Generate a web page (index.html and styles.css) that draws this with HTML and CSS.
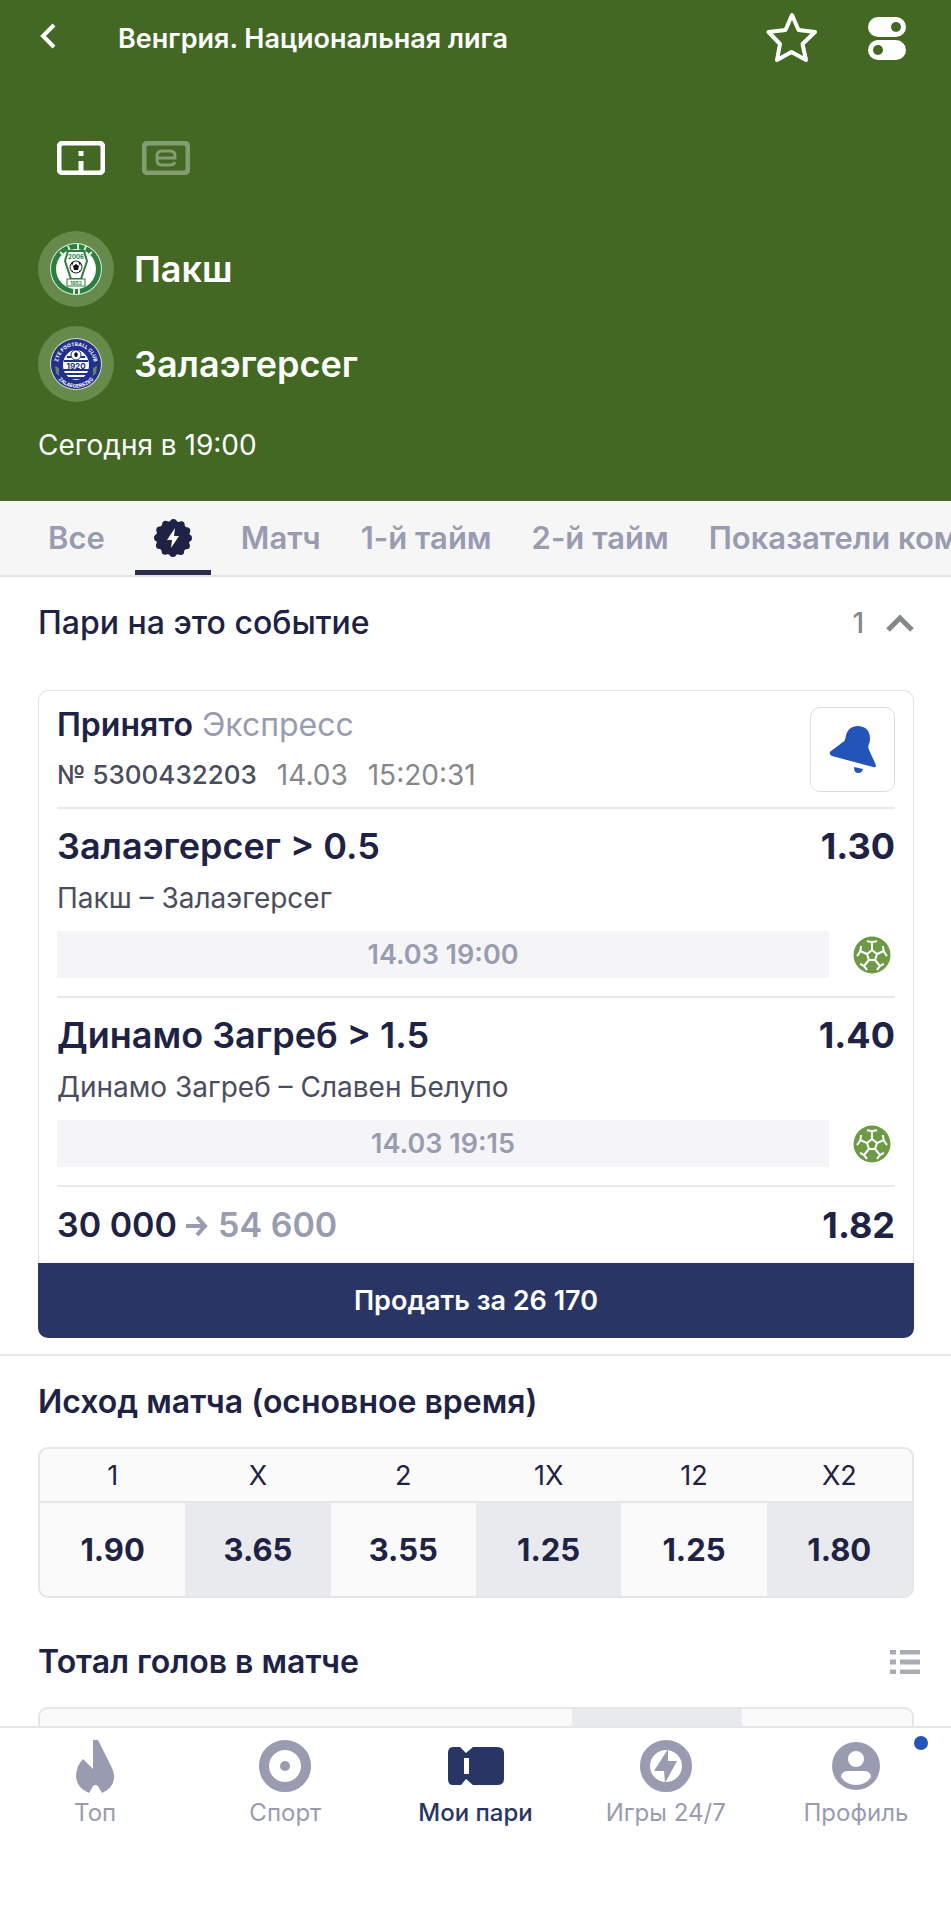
FILE: index.html
```html
<!DOCTYPE html>
<html lang="ru">
<head>
  <meta charset="UTF-8" />
  <meta name="viewport" content="width=device-width, initial-scale=1.0"/>
  <title>Пакш – Залаэгерсег</title>
  <link rel="stylesheet" href="styles.css">
</head>
<body>

  <!-- Match header -->
  <header class="match-header">
    <div class="top-bar">
      <button type="button" class="icon-button" aria-label="Назад">
        <svg width="20" height="32" viewBox="0 0 20 32"><path d="M16 3 L5 14 L16 25" fill="none" stroke="#fff" stroke-width="4"/></svg>
      </button>
      <h1>Венгрия. Национальная лига</h1>
      <button type="button" class="icon-button" aria-label="В избранное">
        <svg width="52" height="50" viewBox="0 0 52 50"><path d="M26 2 L32.5 17 L49 19 L36.500 31 L40 47 L25.500 39 L11 47 L14 31 L2.500 19 L19.500 17 Z" fill="none" stroke="#fff" stroke-width="4" stroke-linejoin="round"/></svg>
      </button>
      <button type="button" class="icon-button" aria-label="Настройки">
        <svg width="38" height="43" viewBox="0 0 38 43">
          <rect width="38" height="20" rx="10" fill="#fff"/>
          <rect y="23" width="38" height="20" rx="10" fill="#fff"/>
          <circle cx="28" cy="10" r="5" fill="#426824"/>
          <circle cx="10" cy="33" r="5" fill="#426824"/>
        </svg>
      </button>
    </div>

    <div class="view-switch">
      <button type="button" class="icon-button" aria-label="Поле">
        <svg width="48" height="34" viewBox="0 0 48 34">
          <rect x="2" y="2" width="44" height="30" rx="4" fill="none" stroke="#fff" stroke-width="5"/>
          <path d="M24 10 V15 M24 20 V30" stroke="#fff" stroke-width="5"/>
        </svg>
      </button>
      <button type="button" class="icon-button muted" aria-label="Статистика">
        <svg width="48" height="34" viewBox="0 0 48 34">
          <rect x="2" y="2" width="44" height="30" rx="4" fill="none" stroke="#fff" stroke-width="5"/>
          <path d="M15 17 H33 V15 Q33 10 28 10 H20 Q15 10 15 15 V19 Q15 24 20 24 H28 Q32 24 33 21" fill="none" stroke="#fff" stroke-width="3"/>
        </svg>
      </button>
    </div>

    <div class="team">
      <span class="crest">
        <svg width="52" height="52" viewBox="0 0 52 52">
          <circle cx="26" cy="26" r="26" fill="#d5efd0"/>
          <circle cx="26" cy="26" r="25" fill="#2c7d3e"/>
          <circle cx="26" cy="26" r="20" fill="#fff"/>
          <path d="M10 9 L14 13 M18 3 L20 8 M28 1 V7 M36 3 L34 8 M42 9 L38 13 M24 46 V51 M29 46 V51" stroke="#d5efd0" stroke-width="2"/>
          <path d="M18 8 H34 L37 18 L31 36 H21 L15 18 Z" fill="#fff" stroke="#2c7d3e" stroke-width="2"/>
          <rect x="17" y="36" width="18" height="7" fill="#fff" stroke="#2c7d3e" stroke-width="1"/>
          <text x="26" y="16" class="crest-year">2006</text>
          <text x="26" y="42" class="crest-founded">1952</text>
          <circle cx="26" cy="24" r="6" fill="#fff" stroke="#222" stroke-width="1"/>
          <path d="M26 21 L29 23 L28 27 H24 L23 23 Z M21 20 L24 18 L22 23 Z M31 20 L28 18 L30 23 Z M22 27 L24 30 L21 28 Z M30 27 L28 30 L31 28 Z" fill="#111"/>
        </svg>
      </span>
      <span>Пакш</span>
    </div>
    <div class="team">
      <span class="crest">
        <svg width="52" height="52" viewBox="0 0 52 52">
          <circle cx="26" cy="26" r="26" fill="#d8d5b4"/>
          <circle cx="26" cy="26" r="25" fill="#20308c"/>
          <ellipse cx="26" cy="27" rx="13" ry="15" fill="#fff"/>
          <path d="M17 19 H35 M14 23 H38 M13 32 H39 M14 36 H38 M18 40 H34" stroke="#20308c" stroke-width="2"/>
          <circle cx="26" cy="17" r="5" fill="#fff" stroke="#20308c" stroke-width="1"/>
          <path d="M26 14 L28 16 L27 19 H25 L24 16 Z" fill="#111"/>
          <text x="26" y="31" class="crest-number">1920</text>
          <path d="M5 28 L9 30 V38 L6 35 Z M47 28 L43 30 V38 L46 35 Z" fill="#6d8264"/>
          <path id="arcTop" d="M8 26 A18 18 0 0 1 44 26" fill="none"/>
          <path id="arcBottom" d="M5 36 A23 23 0 0 0 47 36" fill="none"/>
          <text class="crest-arc"><textPath href="#arcTop" startOffset="50%">ZTE FOOTBALL CLUB</textPath></text>
          <text class="crest-arc"><textPath href="#arcBottom" startOffset="50%">ZALAEGERSZEG</textPath></text>
        </svg>
      </span>
      <span>Залаэгерсег</span>
    </div>
    <p class="kickoff">Сегодня в 19:00</p>
  </header>

  <nav class="tabs" aria-label="Рынки">
    <a href="#">Все</a>
    <a href="#" class="active" aria-label="Популярное">
      <svg width="38" height="38" viewBox="0 0 38 38">
        <circle cx="19" cy="19" r="17" fill="#1e2244"/>
        <circle cx="19" cy="19" r="15.500" fill="none" stroke="#1e2244" stroke-width="7" stroke-linecap="round" stroke-dasharray="0 8.116"/>
        <path d="M21 9 L13 21 H18 L17 29 L25 17 H20 Z" fill="#fff"/>
      </svg>
    </a>
    <a href="#">Матч</a>
    <a href="#">1-й тайм</a>
    <a href="#">2-й тайм</a>
    <a href="#">Показатели команд</a>
  </nav>

  <main>
    <!-- Bets on this event -->
    <section class="bets">
      <div class="bets-head">
        <h2>Пари на это событие</h2>
        <span class="count">1</span>
        <button type="button" class="icon-button" aria-label="Свернуть">
          <svg width="28" height="18" viewBox="0 0 28 18"><path d="M2 16 L14 4 L26 16" fill="none" stroke="#84878c" stroke-width="5"/></svg>
        </button>
      </div>

      <article class="coupon">
        <div class="coupon-body">
          <div class="coupon-head">
            <div>
              <p class="status"><b>Принято</b> Экспресс</p>
              <p class="details"><span class="number">№ 5300432203</span><span>14.03</span><span>15:20:31</span></p>
            </div>
            <button type="button" class="bell" aria-label="Уведомления">
              <svg width="48" height="50" viewBox="0 0 48 50">
                <path d="M1 29 Q0 27 2 26 L14 17 Q16 16 16.500 13 Q18 1 29.500 1 Q41 2 41 14 Q41 17 39.500 20 Q39 22 40 25 L46.500 39 Q48 43 44 42 L3 31 Q1 30 1 29 Z" fill="#2254ba"/>
                <path d="M25 42 L34 44 Q33 48 29 48 Q25 48 25 42 Z" fill="#2254ba"/>
              </svg>
            </button>
          </div>

          <div class="event">
            <p class="pick"><span>Залаэгерсег &gt; 0.5</span><span class="odds">1.30</span></p>
            <p class="teams">Пакш – Залаэгерсег</p>
            <div class="event-time">
              <time>14.03 19:00</time>
              <svg class="ball" width="38" height="38" viewBox="0 0 38 38"><use href="#ball"/></svg>
            </div>
          </div>

          <div class="event">
            <p class="pick"><span>Динамо Загреб &gt; 1.5</span><span class="odds">1.40</span></p>
            <p class="teams">Динамо Загреб – Славен Белупо</p>
            <div class="event-time">
              <time>14.03 19:15</time>
              <svg class="ball" width="38" height="38" viewBox="0 0 38 38"><use href="#ball"/></svg>
            </div>
          </div>

          <p class="pick total">
            <span class="stake">30 000
              <svg width="24" height="22" viewBox="0 0 24 22"><path d="M1 11 H20 M12 2 L20 11 L12 20" fill="none" stroke="#999cb0" stroke-width="4"/></svg>
              <span class="payout">54 600</span></span>
            <span class="odds">1.82</span>
          </p>
        </div>
        <button type="button" class="sell">Продать за 26 170</button>
      </article>
    </section>

    <section class="market">
      <h2>Исход матча (основное время)</h2>
      <table>
        <thead>
          <tr><th>1</th><th>X</th><th>2</th><th>1X</th><th>12</th><th>X2</th></tr>
        </thead>
        <tbody>
          <tr>
            <td><button type="button">1.90</button></td>
            <td><button type="button">3.65</button></td>
            <td><button type="button">3.55</button></td>
            <td><button type="button">1.25</button></td>
            <td><button type="button">1.25</button></td>
            <td><button type="button">1.80</button></td>
          </tr>
        </tbody>
      </table>
    </section>

    <section class="market">
      <div class="market-head">
        <h2>Тотал голов в матче</h2>
        <button type="button" class="icon-button" aria-label="Список">
          <svg width="30" height="24" viewBox="0 0 30 24"><path d="M0 2 H6 M10 2 H30 M0 12 H6 M10 12 H30 M0 22 H6 M10 22 H30" stroke="#a9abb5" stroke-width="5"/></svg>
        </button>
      </div>
      <table class="totals">
        <tbody>
          <tr><td class="wide"></td><td></td><td></td></tr>
        </tbody>
      </table>
    </section>
  </main>

  <nav class="bottom-nav" aria-label="Меню">
    <a href="#">
      <svg width="58" height="56" viewBox="0 0 58 56">
        <path d="M27 1 H32 L45 27 Q49 35 48 40 Q47 49 36 54 L32 47 Q29 45 27 47 L23 54 Q11 49 10 38 Q10 27 17 20 L27 30 Z" fill="#999cb0"/>
      </svg>
      <span>Топ</span>
    </a>
    <a href="#">
      <svg width="58" height="56" viewBox="0 0 58 56">
        <circle cx="29" cy="27" r="21" fill="none" stroke="#999cb0" stroke-width="10"/>
        <circle cx="29" cy="27" r="5" fill="#999cb0"/>
      </svg>
      <span>Спорт</span>
    </a>
    <a href="#" class="current">
      <svg width="58" height="56" viewBox="0 0 58 56">
        <path d="M6 8 H13 L19 14 L26 8 H50 Q57 8 57 14 V40 Q57 46 50 46 H26 L19 40 L14 46 H6 Q1 46 1 40 V14 Q1 8 6 8 Z" fill="#293565"/>
        <rect x="17" y="19" width="5" height="16" fill="#fff"/>
      </svg>
      <span>Мои пари</span>
    </a>
    <a href="#">
      <svg width="58" height="56" viewBox="0 0 58 56">
        <circle cx="29" cy="27" r="21" fill="none" stroke="#999cb0" stroke-width="10"/>
        <path d="M31 10 L17 32 H27 L28 44 L40 22 H31 Z" fill="#999cb0"/>
      </svg>
      <span>Игры 24/7</span>
    </a>
    <a href="#" class="profile">
      <svg width="58" height="56" viewBox="0 0 58 56">
        <circle cx="29" cy="27" r="24" fill="#999cb0"/>
        <circle cx="29" cy="20" r="8" fill="#fff"/>
        <path d="M20 32 H38 Q44 33 44 38 Q39 46 29 46 Q19 46 14 38 Q14 33 20 32 Z" fill="#fff"/>
      </svg>
      <span>Профиль</span>
    </a>
  </nav>

  <svg width="0" height="0" class="sprite">
    <symbol id="ball" viewBox="0 0 38 38">
      <circle cx="19" cy="19" r="18.500" fill="#6c9a45"/>
      <g fill="none" stroke="#fff" stroke-width="2">
        <path d="M19 14 L24 18 L22 24 H16 L14 18 Z"/>
        <path d="M19 14 V6 M24 18 L31 15 M22 24 L27 30 M16 24 L11 30 M14 18 L7 15"/>
        <path d="M14 5 Q19 7 24 5 M30 10 Q30 16 34 20 M31 28 Q27 29 24 34 M14 34 Q11 29 7 28 M4 20 Q8 16 8 10"/>
      </g>
    </symbol>
  </svg>
</body>
</html>
```

FILE: styles.css
```css
* {
  box-sizing: border-box;
}

body {
  margin: 0;
  height: 100vh;
  display: flex;
  flex-direction: column;
  font-family: Inter, 'Open Sans', sans-serif;
  color: #1e2244;
  background-color: #fff;
}

h1,
h2,
p {
  margin: 0;
}

svg {
  display: block;
}

a {
  color: inherit;
  text-decoration: none;
}

button {
  padding: 0;
  border: none;
  background: none;
  color: inherit;
  font-family: inherit;
  cursor: pointer;
}

.icon-button {
  flex: none;
}

.sprite {
  position: absolute;
}

/* Header */
.match-header {
  flex: none;
  padding: 0 38px 40px;
  background-color: #426824;
  color: #fff;
}

.top-bar {
  display: flex;
  align-items: center;
  height: 76px;
  padding-right: 7px;
}

.top-bar h1 {
  flex: 1;
  margin-left: 60px;
  font-size: 27px;
  font-weight: 600;
}

.top-bar .icon-button + .icon-button {
  margin-left: 50px;
}

.view-switch {
  display: flex;
  gap: 37px;
  padding: 65px 19px 56px;
}

.muted {
  opacity: 0.35;
}

.team {
  display: flex;
  align-items: center;
  gap: 20px;
  margin-bottom: 19px;
  font-size: 36px;
  font-weight: 600;
}

.crest {
  display: flex;
  align-items: center;
  justify-content: center;
  width: 76px;
  height: 76px;
  border-radius: 50%;
  background-color: #658a4b;
}

.crest svg {
  overflow: visible;
}

.crest text {
  font-weight: 700;
  text-anchor: middle;
}

.crest-year {
  font-size: 6px;
  fill: #2c7d3e;
}

.crest-founded {
  font-size: 5px;
  fill: #2c7d3e;
}

.crest-number {
  font-size: 8px;
  fill: #20308c;
}

.crest-arc {
  font-size: 5px;
  fill: #fff;
}

.kickoff {
  padding-top: 8px;
  font-size: 28px;
  line-height: 32px;
}

/* Market tabs */
.tabs {
  flex: none;
  display: flex;
  gap: 40px;
  height: 76px;
  padding: 0 48px;
  overflow: hidden;
  white-space: nowrap;
  border-bottom: 2px solid #e4e4e6;
  background-color: #f6f6f7;
  color: #999cb0;
  font-size: 31px;
  font-weight: 600;
  line-height: 74px;
}

.tabs .active {
  flex: none;
  width: 76px;
  margin: 0 -10px;
  padding: 18px 19px 0;
  border-bottom: 5px solid #2c2d4c;
}

main {
  flex: 1;
  min-height: 0;
  overflow: hidden;
}

h2 {
  font-size: 32px;
  font-weight: 600;
  line-height: 36px;
}

/* Bets */
.bets {
  padding: 28px 37px 16px 38px;
  border-bottom: 2px solid #e9e9eb;
}

.bets-head {
  display: flex;
  align-items: center;
  gap: 22px;
  height: 36px;
  margin-bottom: 49px;
}

.bets-head h2 {
  flex: 1;
  font-weight: 500;
}

.count {
  color: #84878c;
  font-size: 28px;
  font-weight: 500;
}

.coupon-body {
  padding: 16px 18px 0;
  border: 1px solid #e2e2e5;
  border-bottom: none;
  border-radius: 10px 10px 0 0;
}

.coupon-head {
  display: flex;
  justify-content: space-between;
  padding-bottom: 15px;
}

.status {
  color: #999cb0;
  font-size: 32px;
  line-height: 36px;
}

.status b {
  color: #1e2244;
  font-weight: 600;
}

.details {
  display: flex;
  gap: 20px;
  margin-top: 16px;
  color: #84878c;
  font-size: 28px;
  line-height: 32px;
}

.number {
  color: #4a4d5e;
  font-size: 26px;
  font-weight: 500;
}

.bell {
  display: flex;
  align-items: center;
  justify-content: center;
  width: 85px;
  height: 85px;
  border: 1px solid #dedee2;
  border-radius: 10px;
}

.event {
  padding: 15px 0 18px;
  border-top: 2px solid #e9e9eb;
}

.pick {
  display: flex;
  justify-content: space-between;
  font-size: 36px;
  font-weight: 600;
  line-height: 44px;
}

.odds {
  font-weight: 700;
}

.teams {
  margin: 14px 0 17px;
  color: #4a4d5e;
  font-size: 28px;
  line-height: 32px;
}

.event-time {
  display: flex;
  align-items: center;
}

.event-time time {
  flex: 1;
  background-color: #f5f5f8;
  color: #999cb0;
  font-size: 27px;
  font-weight: 600;
  line-height: 47px;
  text-align: center;
}

.ball {
  margin: 0 4px 0 24px;
}

.total {
  padding: 16px 0;
  border-top: 2px solid #e9e9eb;
}

.total svg {
  display: inline-block;
}

.stake {
  font-size: 34px;
}

.payout {
  color: #999cb0;
}

.sell {
  display: block;
  width: 100%;
  height: 75px;
  border-radius: 0 0 10px 10px;
  background-color: #293565;
  color: #fff;
  font-size: 27px;
  font-weight: 600;
}

/* Odds tables */
.market {
  padding: 28px 37px 18px 38px;
}

.market h2 {
  margin-bottom: 27px;
}

.market-head {
  display: flex;
  justify-content: space-between;
  align-items: flex-start;
  margin-right: -6px;
}

.market-head .icon-button {
  padding-top: 6px;
}

table {
  width: 100%;
  table-layout: fixed;
  border: 2px solid #e6e6e9;
  border-radius: 10px;
  border-spacing: 0;
  overflow: hidden;
  background-color: #fafafa;
}

th,
td {
  padding: 0;
}

th {
  height: 54px;
  border-bottom: 2px solid #e6e6e9;
  font-size: 27px;
  font-weight: 400;
}

td:nth-child(even) {
  background-color: #e9eaee;
}

td button {
  display: block;
  width: 100%;
  height: 93px;
  font-size: 31px;
  font-weight: 700;
}

.totals td {
  height: 93px;
}

.totals .wide {
  width: 61%;
}

/* Bottom navigation */
.bottom-nav {
  flex: none;
  display: flex;
  height: 194px;
  padding-top: 11px;
  border-top: 2px solid #e6e6e9;
  background-color: #fff;
  color: #999cb0;
}

.bottom-nav a {
  position: relative;
  flex: 1;
  display: flex;
  flex-direction: column;
  align-items: center;
  gap: 4px;
  font-size: 24px;
  line-height: 28px;
}

.bottom-nav .current {
  color: #293565;
  font-weight: 500;
}

.profile::after {
  content: '';
  position: absolute;
  top: -3px;
  right: 23px;
  width: 14px;
  height: 14px;
  border-radius: 50%;
  background-color: #2254ba;
}
```
